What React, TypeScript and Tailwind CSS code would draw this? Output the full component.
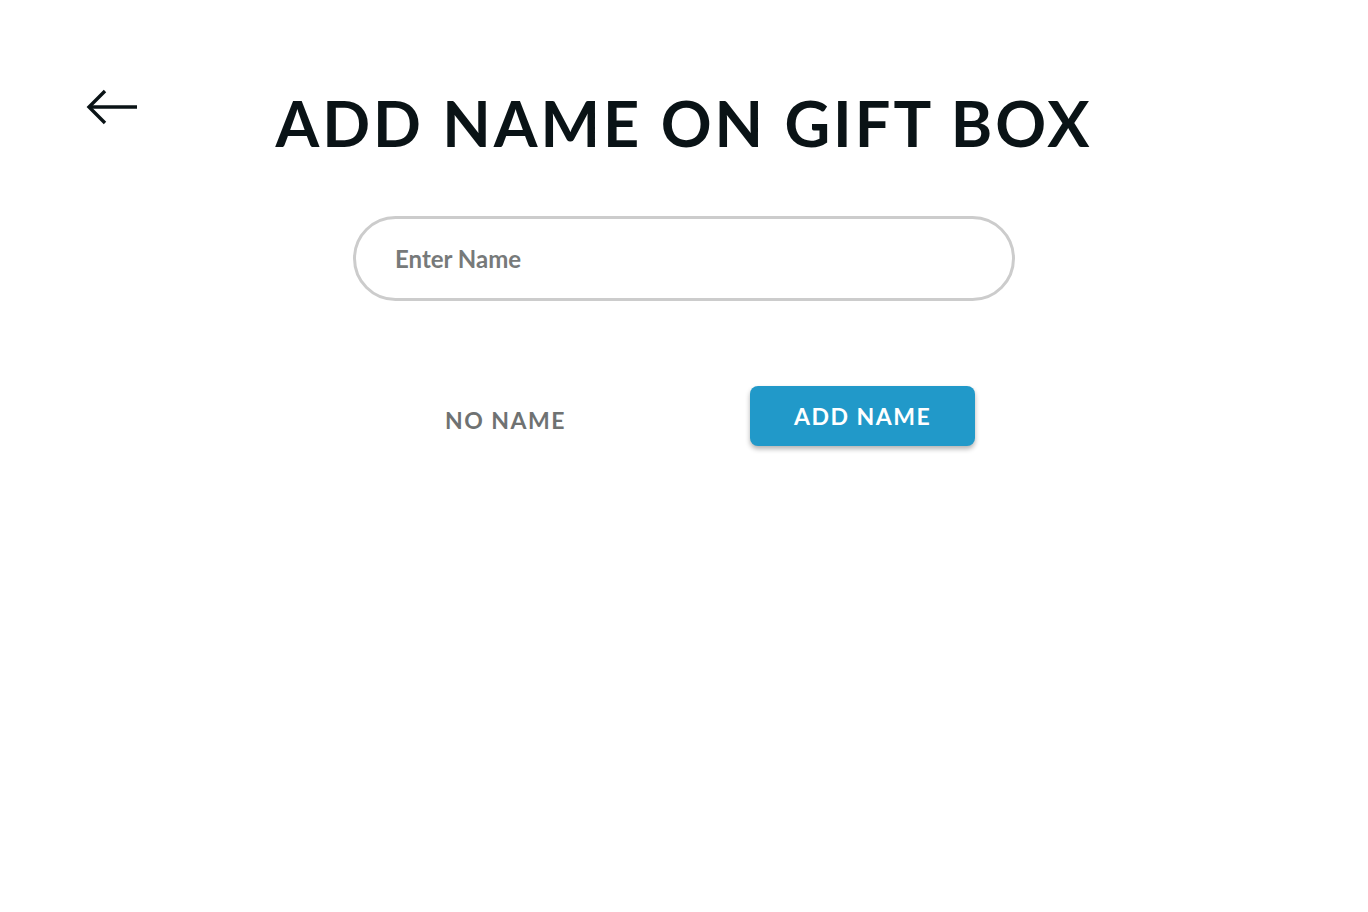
import React from "react";

export default function App() {
  return (
    <div className="w-[1368px] h-[912px] bg-white relative" style={{ fontFamily: "Lato, 'Open Sans', sans-serif" }}>
      <button className="absolute left-[86px] top-[88px] w-[52px] h-[38px]" aria-label="Back">
        <svg width="52" height="38" viewBox="0 0 52 38" fill="none" stroke="#0a1316" strokeWidth="3.4" strokeLinecap="butt">
          <path d="M51 19H4" />
          <path d="M19 3L3 19l16 16" />
        </svg>
      </button>
      <div className="flex flex-col items-center pt-[83px]">
        <h1 className="text-[63px] leading-[80px] font-bold tracking-[3px] text-[#0a1316]">ADD NAME ON GIFT BOX</h1>
        <div className="mt-[53px] w-[662px] h-[85px] rounded-full border-[3px] border-[#cccccc] flex items-center px-[39px]">
          <input
            className="w-full outline-none bg-transparent text-[24px] font-bold text-[#6f7373] placeholder:text-[#777a7a]"
            placeholder="Enter Name"
          />
        </div>
        <div className="mt-[85px] flex items-center gap-[184px] ml-[52px]">
          <button className="text-[23px] font-bold tracking-[1.5px] text-[#6f7272] mt-[8px]">NO NAME</button>
          <button className="w-[225px] h-[60px] rounded-[8px] bg-[#2199c9] text-white text-[23px] font-bold tracking-[1.5px] shadow-[0_3px_5px_rgba(0,0,0,0.3)]">ADD NAME</button>
        </div>
      </div>
    </div>
  );
}
